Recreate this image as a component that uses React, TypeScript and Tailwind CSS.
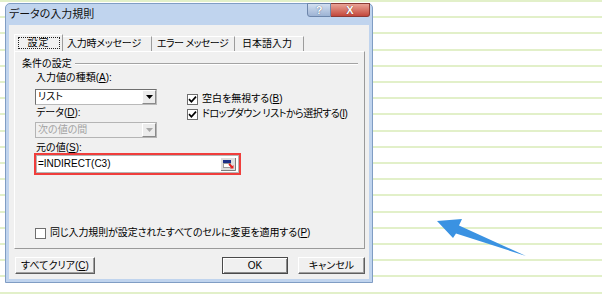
import React from "react"

const U = ({ children }: { children: React.ReactNode }) => (
  <span className="underline underline-offset-[1px] decoration-[1px]">{children}</span>
)

function Check({ checked }: { checked?: boolean }) {
  return (
    <span className="w-[11px] h-[11px] shrink-0 border border-[#6e6e6e] bg-white flex items-center justify-center">
      {checked && (
        <svg width="9" height="9" viewBox="0 0 9 9">
          <path d="M1 4.2 L3.4 6.8 L8 1.6" stroke="#000" strokeWidth="1.7" fill="none" />
        </svg>
      )}
    </span>
  )
}

function Select({ value, disabled }: { value: string; disabled?: boolean }) {
  return (
    <div
      className={
        disabled
          ? "w-[122px] h-[16px] flex border border-[#b4b4b4] bg-[#f0f0f0]"
          : "w-[122px] h-[16px] flex border border-t-[#6f6f6f] border-l-[#6f6f6f] border-r-[#b9b9b9] border-b-[#b9b9b9] bg-white"
      }
    >
      <span className={disabled ? "flex-1 pl-[2px] leading-[14px] text-[#a3a3a3]" : "flex-1 pl-[2px] leading-[14px]"}>{value}</span>
      <span className="w-[14px] h-[14px] bg-[#ececec] border border-t-white border-l-white border-r-[#8a8a8a] border-b-[#8a8a8a] flex items-center justify-center">
        <svg width="7" height="4" viewBox="0 0 7 4">
          <path d="M0 0 H7 L3.5 4 Z" fill={disabled ? "#a8a8a8" : "#000"} />
        </svg>
      </span>
    </div>
  )
}

function RefEdit() {
  return (
    <svg width="15" height="13" viewBox="0 0 15 13">
      <rect x="0" y="0" width="15" height="13" fill="#dedede" />
      <path d="M0 12.5 H14.5 V0" stroke="#7d7d7d" fill="none" />
      <rect x="2" y="2" width="8" height="3" fill="#1d2f86" />
      <rect x="2.5" y="5.5" width="7" height="4" fill="#fff" stroke="#9a9a9a" />
      <path d="M8 6 L11.5 9.5" stroke="#e8211f" strokeWidth="1.8" />
      <path d="M9 10.5 H12.5 V7 Z" fill="#e8211f" />
    </svg>
  )
}

function Button({ children, def, className }: { children: React.ReactNode; def?: boolean; className: string }) {
  return (
    <div
      className={
        def
          ? `${className} h-[17px] border border-[#4a4a4a] bg-[#f0f0f0] shadow-[inset_1px_1px_0_#fff,inset_-1px_-1px_0_#8a8a8a] flex items-center justify-center`
          : `${className} h-[17px] border border-t-white border-l-white border-r-[#5f5f5f] border-b-[#5f5f5f] bg-[#f0f0f0] shadow-[inset_-1px_-1px_0_#a0a0a0] flex items-center justify-center`
      }
    >
      {children}
    </div>
  )
}

export default function App() {
  return (
    <div className="relative w-[602px] h-[302px] overflow-hidden bg-white bg-[repeating-linear-gradient(to_bottom,#e2f0c9_0px,#e2f0c9_2px,transparent_2px,transparent_16.2px)] font-['Liberation_Sans','Noto_Sans_CJK_JP',sans-serif] text-[10px] text-black [font-feature-settings:'palt']">
      <div className="w-[368px] h-[280px] ml-[5px] mt-[3px] flex flex-col border border-[#809dc4] bg-[#c0d4ee] rounded-t-[5px] px-[3px] pb-[3px]">
        {/* title bar */}
        <div className="h-[21px] flex items-start justify-between">
          <span className="text-[11px] leading-[18px] mt-[1px] text-[#111]">データの入力規則</span>
          <div className="flex -mt-[1px] -mr-[1px]">
            <div className="w-[24px] h-[14px] rounded-bl-[3px] border border-[#6d86ab] bg-linear-to-b from-[#d2dff0] to-[#9db3d4] flex items-center justify-center text-[11px] font-bold leading-none text-white [text-shadow:0_0_1px_#2b3f66]">
              ?
            </div>
            <div className="w-[39px] h-[14px] rounded-br-[3px] border border-l-0 border-[#8b3b35] bg-linear-to-b from-[#e8a396] to-[#c2473c] flex items-center justify-center text-[11px] font-bold leading-none text-white [text-shadow:0_0_1px_#5a1a14]">
              X
            </div>
          </div>
        </div>

        {/* client area */}
        <div className="flex-1 bg-[#f0f0f0] flex flex-col">
          {/* tabs */}
          <div className="mt-[9px] ml-[5px] h-[17px] flex items-end">
            <div className="w-[49px] h-[17px] border-t border-l border-r border-t-white border-l-white border-r-[#9c9c9c] flex items-center justify-center">
              <span className="w-[42px] h-[12px] border border-dotted border-[#222] leading-[10px] flex justify-center tracking-[1px]">設定</span>
            </div>
            <div className="w-[89px] h-[15px] border-t border-r border-t-white border-r-[#9c9c9c] pl-[4px] leading-[14px] tracking-[-0.2px]">入力時メッセージ</div>
            <div className="w-[83px] h-[15px] border-t border-r border-t-white border-r-[#9c9c9c] pl-[5px] leading-[14px] tracking-[-0.6px]">エラー メッセージ</div>
            <div className="w-[69px] h-[15px] border-t border-r border-t-white border-r-[#9c9c9c] pl-[7px] leading-[14px]">日本語入力</div>
          </div>

          {/* panel */}
          <div className="ml-[5px] mr-[4px] h-[198px] border border-t-white border-l-white border-r-[#9a9a9a] border-b-[#9a9a9a] flex flex-col">
            <div className="mt-[5px] h-[13px] flex items-center pl-[7px] pr-[6px]">
              <span className="leading-[10px]">条件の設定</span>
              <div className="flex-1 ml-[3px] h-[2px] border-t border-b border-t-[#a3a3a3] border-b-white" />
            </div>

            <div className="mt-[3px] pl-[20px] flex">
              <div className="w-[122px] flex flex-col">
                <span className="ml-[1px] h-[10px] leading-[10px]">
                  入力値の種類(<U>A</U>):
                </span>
                <div className="mt-[6px]">
                  <Select value="リスト" />
                </div>
                <span className="mt-[3px] ml-[1px] h-[10px] leading-[10px]">
                  データ(<U>D</U>):
                </span>
                <div className="mt-[4px]">
                  <Select value="次の値の間" disabled />
                </div>
              </div>
              <div className="ml-[30px] pt-[20px] flex flex-col gap-[3px]">
                <div className="h-[12px] flex items-center gap-[4px]">
                  <Check checked />
                  <span className="leading-[10px]">
                    空白を無視する(<U>B</U>)
                  </span>
                </div>
                <div className="h-[12px] flex items-center gap-[4px]">
                  <Check checked />
                  <span className="leading-[10px] tracking-[-0.5px]">
                    ドロップダウン リストから選択する(<U>I</U>)
                  </span>
                </div>
              </div>
            </div>

            <span className="mt-[5px] ml-[21px] h-[10px] leading-[10px]">
              元の値(<U>S</U>):
            </span>
            <div className="ml-[19px] w-[207px] h-[22px] border-2 border-[#f03e3c]">
              <div className="h-full border border-[#b5b5b5] bg-white flex items-center justify-between">
                <span className="pl-[1px] leading-[12px]">=INDIRECT(C3)</span>
                <span className="mr-[2px] flex">
                  <RefEdit />
                </span>
              </div>
            </div>

            <div className="mt-[52px] pl-[20px] h-[12px] flex items-center gap-[4px]">
              <Check />
              <span className="leading-[10px] tracking-[-0.1px]">
                同じ入力規則が設定されたすべてのセルに変更を適用する(<U>P</U>)
              </span>
            </div>
          </div>

          {/* buttons */}
          <div className="mt-[8px] flex">
            <Button className="ml-[6px] w-[80px]">
              すべてクリア(<U>C</U>)
            </Button>
            <div className="flex-1" />
            <Button def className="w-[66px]">
              OK
            </Button>
            <Button className="ml-[10px] mr-[4px] w-[67px]">キャンセル</Button>
          </div>
        </div>
      </div>

      {/* annotation arrow */}
      <svg className="absolute left-[430px] top-[212px]" width="100" height="50" viewBox="430 212 100 50">
        <polygon points="437,221 462,219 459,225.5 526,256 456,233.5 453,238" fill="#3a92e2" />
      </svg>
    </div>
  )
}
